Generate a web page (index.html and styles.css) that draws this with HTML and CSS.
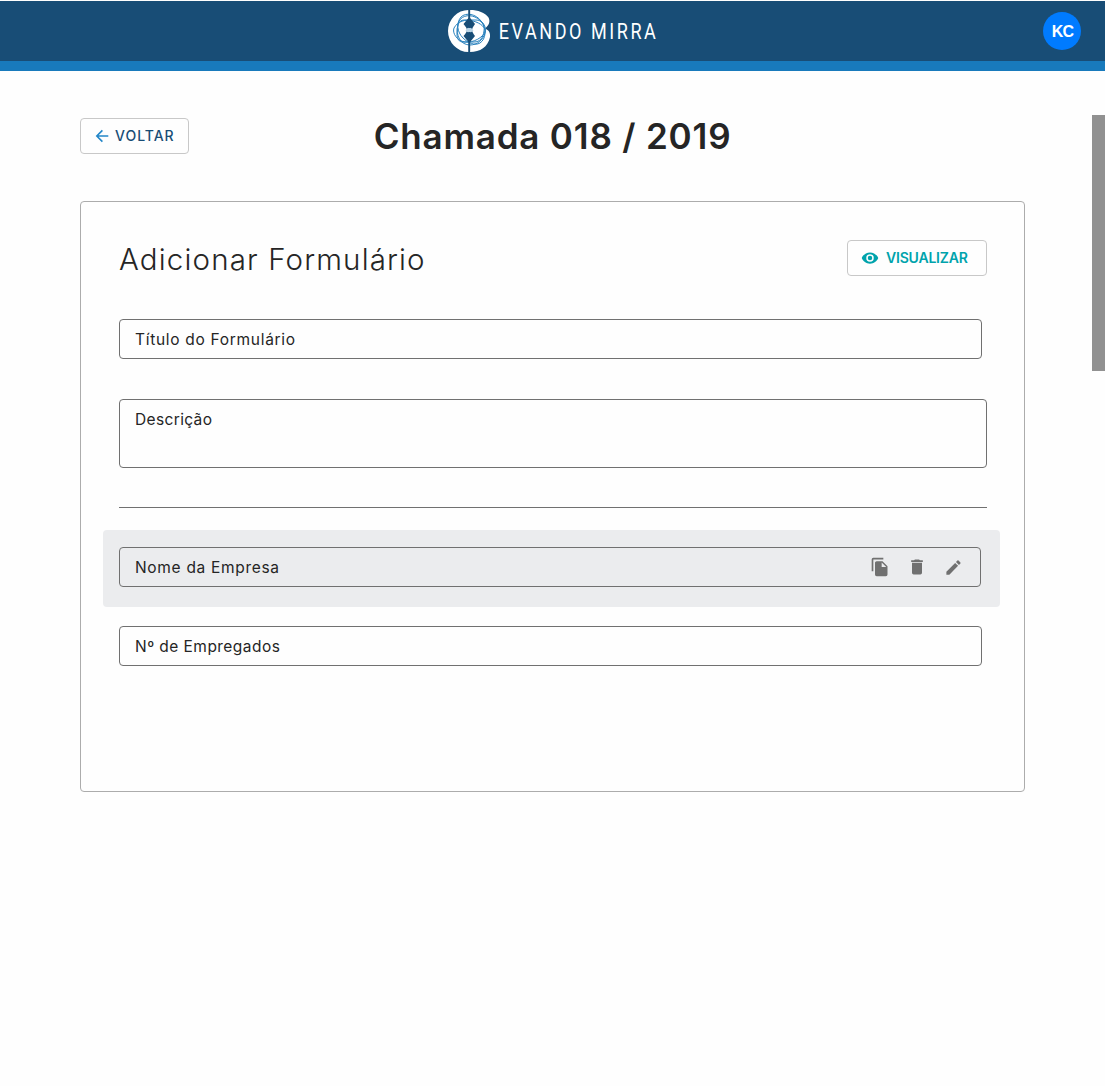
FILE: index.html
```html
<!DOCTYPE html>
<html lang="pt-BR">
<head>
<meta charset="utf-8">
<title>Chamada 018 / 2019</title>
<link rel="stylesheet" href="styles.css">
</head>
<body>
<header class="topbar">
  <svg class="logo" width="212" height="44" viewBox="0 0 212 44" role="img" aria-label="Evando Mirra">
    <path d="M20.500 1A20.500 21 0 0 0 20.500 43ZM22 1C30 1 37 3.500 40.500 8.500C42.500 12.500 41 16.500 37 19.500C41 21 42.500 24 42 28C40 38 32 43 22 43Z" fill="#fff"/>
    <g fill="none" stroke="#2a82be" stroke-width="1">
      <path d="M16 11H28C34 11 37 16 36 22C35 29 32 33 26 33H15C11 33 9 30 9 25C9 18 10 11 16 11Z"/>
      <path d="M10 15C12 7 20 5 27 8C35 12 39 18 37 24C35 31 29 36 22 36C13 36 7 27 10 15Z"/>
      <path d="M13 8C18 3 28 5 33 12C39 20 38 30 32 34C27 37 20 34 15 29C9 23 8 14 13 8Z"/>
      <path d="M6 19C10 12 17 10 25 12C33 14 38 19 37 23C35 28 26 34 17 33C9 32 4 24 6 19Z"/>
    </g>
    <path d="M21.300 8L27 15Q24 19 24 21Q24 23 27 27L21.300 34L15.500 27Q19 23 19 21Q19 19 15.500 15Z" fill="#184d76"/>
    <path d="M17.500 21.500Q19 18.500 21.300 18.500Q23.500 18.500 25.500 21.500Q23.500 23.500 21.300 23.500Q19 23.500 17.500 21.500Z" fill="#b9d4e6"/>
    <path d="M21.300 0V19M21.300 23V44" stroke="#184d76" stroke-width="1.700"/>
    <text class="logo-text" transform="translate(50.800 29.500) scale(.82 1)" textLength="191.500" lengthAdjust="spacing">EVANDO MIRRA</text>
  </svg>
  <div class="avatar">KC</div>
</header>
<main class="page">
  <div class="page-head">
    <button class="btn btn-back">
      <svg width="14" height="14" viewBox="0 0 14 14" fill="none" stroke="#2386c8" stroke-width="1.6"><path d="M13.3 7H2M7.4 1.4L1.8 7L7.4 12.6"/></svg>
      <span>VOLTAR</span>
    </button>
    <h1 class="title">Chamada 018 / 2019</h1>
  </div>
  <section class="card">
    <div class="card-head">
      <h2 class="subtitle">Adicionar Formulário</h2>
      <button class="btn btn-view">
        <svg width="18" height="18" viewBox="0 0 24 24" fill="#00a3ac"><path d="M12 4.500C7 4.500 2.730 7.610 1 12c1.730 4.390 6 7.500 11 7.500s9.270-3.110 11-7.500c-1.730-4.390-6-7.500-11-7.500zM12 17a5 5 0 1 1 0-10 5 5 0 0 1 0 10zm0-8a3 3 0 1 0 0 6 3 3 0 0 0 0-6z"/></svg>
        <span>VISUALIZAR</span>
      </button>
    </div>
    <div class="field field-title"><span class="t-title">Título do Formulário</span></div>
    <div class="field field-desc"><span class="t-desc">Descrição</span></div>
    <hr class="rule">
    <div class="selected">
      <div class="field field-name">
        <span class="t-name">Nome da Empresa</span>
        <div class="actions">
          <svg width="20" height="20" viewBox="0 0 24 24" fill="#707070"><path d="M16 1H4a2 2 0 0 0-2 2v14h2V3h12V1zm-1 4l6 6v10a2 2 0 0 1-2 2H8a2 2 0 0 1-2-2V7c0-1.100.9-2 2-2h7zm-1 7h5.500L14 6.500V12z"/></svg>
          <svg width="20" height="20" viewBox="0 0 24 24" fill="#707070"><path d="M6 19a2 2 0 0 0 2 2h8a2 2 0 0 0 2-2V7H6v12zM19 4h-3.500l-1-1h-5l-1 1H5v2h14V4z"/></svg>
          <svg width="19" height="19" viewBox="0 0 24 24" fill="#707070"><path d="M3 17.250V21h3.750L17.810 9.940l-3.750-3.750L3 17.250zM20.710 7.040a1 1 0 0 0 0-1.410l-2.340-2.340a1 1 0 0 0-1.410 0l-1.830 1.830 3.750 3.750 1.830-1.830z"/></svg>
        </div>
      </div>
    </div>
    <div class="field"><span class="t-emp">Nº de Empregados</span></div>
  </section>
</main>
<div class="scroll-thumb"></div>
</body>
</html>
```
FILE: styles.css
```css
* { box-sizing: border-box; }

body {
  margin: 0;
  height: 1086px;
  padding-top: 1px;
  background: #fefefe;
  color: #252525;
  font-family: Inter, "Liberation Sans", sans-serif;
  overflow: hidden;
}

.topbar {
  display: grid;
  grid-template-columns: 1fr 212px 1fr;
  align-items: center;
  height: 70px;
  padding: 0 24px 0 27px;
  background: #184d76;
  border-bottom: 10px solid #187abc;
}

.logo { grid-column: 2; display: block; }

.logo-text {
  font: 400 22px Roboto, sans-serif;
  fill: #fff;
}

.avatar {
  justify-self: end;
  width: 38px;
  height: 38px;
  padding-left: 1px;
  border-radius: 50%;
  background: #007bff;
  color: #fff;
  font: 700 16px/40px "Liberation Sans", sans-serif;
  letter-spacing: -.7px;
  text-align: center;
}

.page { padding: 47px 80px 0; }

.page-head {
  display: grid;
  grid-template-columns: 109px 1fr 109px;
  align-items: center;
  height: 36px;
}

.title {
  margin: 0;
  font-size: 35px;
  font-weight: 600;
  line-height: 36px;
  letter-spacing: .82px;
  text-align: center;
  white-space: nowrap;
}

.btn {
  display: flex;
  align-items: center;
  height: 36px;
  padding: 0 0 0 14px;
  background: #fefefe;
  border: 1px solid #c8c8c8;
  border-radius: 4px;
  font-family: inherit;
  font-size: 14px;
  line-height: 16px;
}

.btn span { margin-top: -1px; }

.btn-back {
  width: 109px;
  gap: 6px;
  color: #184d76;
  font-weight: 500;
  letter-spacing: 1px;
}

.btn-view {
  width: 140px;
  padding-left: 13px;
  gap: 7px;
  color: #00a3ac;
  font-weight: 600;
  letter-spacing: -.2px;
}

.card {
  height: 591px;
  margin-top: 47px;
  padding: 38px 37px 0 38px;
  border: 1px solid #acacac;
  border-radius: 4px;
}

.card-head {
  display: flex;
  justify-content: space-between;
  align-items: center;
}

.subtitle {
  margin: 0;
  padding-top: 2px;
  font-size: 29.5px;
  font-weight: 300;
  line-height: 34px;
  letter-spacing: 1.15px;
  white-space: nowrap;
}

.field {
  display: flex;
  align-items: center;
  width: 863px;
  height: 40px;
  padding: 0 16px 0 15px;
  border: 1px solid #707070;
  border-radius: 4px;
  font-size: 15.5px;
  white-space: nowrap;
}

.field-title { margin-top: 43px; }

.field-desc {
  width: 868px;
  height: 69px;
  margin-top: 40px;
  padding-top: 10px;
  align-items: flex-start;
}

.t-title { letter-spacing: .7px; }
.t-desc { letter-spacing: .36px; }
.t-name { letter-spacing: .69px; }
.t-emp { letter-spacing: .45px; }

.rule {
  height: 1px;
  margin: 39px 0 22px;
  border: 0;
  background: #707070;
}

.selected {
  width: 897px;
  height: 77px;
  margin: 0 0 19px -16px;
  padding: 17px 16px;
  background: #ebecee;
  border-radius: 4px;
}

.field-name {
  width: 862px;
  padding-right: 17px;
  justify-content: space-between;
}

.actions {
  display: flex;
  align-items: center;
  gap: 17px;
}

.scroll-thumb {
  position: absolute;
  top: 115px;
  right: 0;
  width: 13px;
  height: 256px;
  background: #919191;
}
```
